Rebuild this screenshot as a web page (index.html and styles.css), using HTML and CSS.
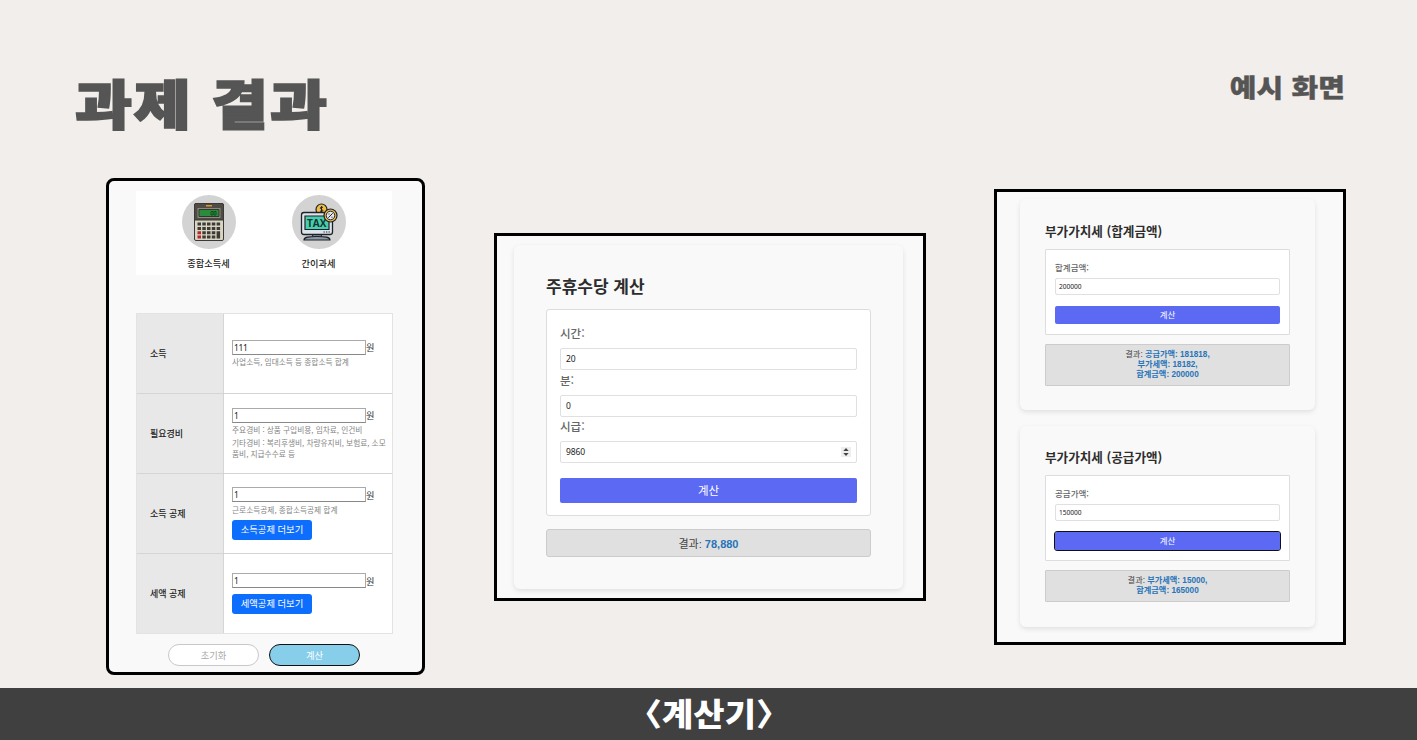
FILE: index.html
```html
<!DOCTYPE html>
<html lang="ko">
<head>
<meta charset="utf-8">
<title>과제 결과</title>
<link rel="stylesheet" href="styles.css">
</head>
<body>
<div class="slide">
  <header class="head">
    <h1 class="title">과제 결과</h1>
    <p class="subtitle">예시 화면</p>
  </header>
  <main class="panels">
    <section class="panel income">
      <nav class="tabs">
        <div class="tab">
          <span class="disc">
            <svg width="54" height="54" viewBox="0 0 54 54">
              <rect x="12.500" y="8.500" width="29" height="37" rx="1.500" fill="#d9d5c3" stroke="#3b3936"/>
              <path d="M12.500 25V10a1.500 1.500 0 0 1 1.500-1.500h26a1.500 1.500 0 0 1 1.500 1.500v15z" fill="#504b45" stroke="#3b3936"/>
              <path d="M24 10h6v1.500h-6z" fill="#d99a2b"/>
              <path d="M15.500 13h23v10h-23z" fill="#8d8a82"/>
              <path d="M17 14.500h20v7h-20z" fill="#2d8b3c" stroke="#2c3a2d"/>
              <path d="M29 16.500h2v3.500h-2zM32 16.500h2v3.500h-2z" fill="none" stroke="#194d25"/>
              <g fill="#3d3a37">
                <path d="M15.500 27.500h3.500v3h-3.500zM20.300 27.500h3.500v3h-3.500zM25 27.500h3.500v3h-3.500zM29.800 27.500h3.500v3h-3.500zM34.600 27.500h3.500v3h-3.500z"/>
                <path d="M15.500 31.900h3.500v3h-3.500zM20.300 31.900h3.500v3h-3.500zM25 31.900h3.500v3h-3.500zM29.800 31.900h3.500v3h-3.500zM34.600 31.900h3.500v3h-3.500z"/>
                <path d="M20.300 36.200h3.500v3h-3.500zM25 36.200h3.500v3h-3.500zM29.800 36.200h3.500v3h-3.500zM34.600 36.200h3.500v7.300h-3.500z"/>
                <path d="M20.300 40.500h3.500v3h-3.500zM25 40.500h3.500v3h-3.500zM29.800 40.500h3.500v3h-3.500z"/>
              </g>
              <path d="M15.500 36.200h3.500v3h-3.500zM15.500 40.500h3.500v3h-3.500z" fill="#b8262c"/>
            </svg>
          </span>
          <span class="tab-name">종합소득세</span>
        </div>
        <div class="tab">
          <span class="disc">
            <svg width="54" height="54" viewBox="0 0 54 54">
              <circle cx="29.500" cy="14.500" r="5.500" fill="#f2bd45" stroke="#1d2228" stroke-width="1.200"/>
              <path d="M31 12.500c-2.500-1.500-3.800 1-1.500 1.800s1.500 3.200-1.500 1.700M29.500 11.200v6.500" fill="none" stroke="#1d2228"/>
              <path d="M21 39h8l1 4h-10z" fill="#8d99a6" stroke="#1d2228"/>
              <path d="M12 45c0-3 4-3.500 13-3.500s13 .5 13 3.500z" fill="#8d99a6" stroke="#1d2228" stroke-width="1.200"/>
              <rect x="9.500" y="17.500" width="31" height="22" rx="2.500" fill="#dfe3ec" stroke="#1d2228" stroke-width="1.300"/>
              <path d="M13 21h24v13.500H13z" fill="#46cfae" stroke="#1d2228" stroke-width="1.200"/>
              <text class="tax" x="15" y="31.500">TAX</text>
              <path d="M31.500 37h1.300M34 37h1.300M36.500 37h1.300" stroke="#1d2228" stroke-width="1.200"/>
              <circle cx="38.500" cy="20.500" r="6.500" fill="#eeb947" stroke="#1d2228" stroke-width="1.200"/>
              <circle cx="38.500" cy="20.500" r="4.300" fill="#e3e6ee" stroke="#1d2228"/>
              <path d="M36.300 22.700l4.400-4.400M36.500 19h1M39.500 22.200h1" stroke="#1d2228"/>
            </svg>
          </span>
          <span class="tab-name">간이과세</span>
        </div>
      </nav>
      <div class="grid">
        <div class="row">
          <div class="name">소득</div>
          <div class="cell"><div class="entry"><span class="box">111</span>원</div><p class="note">사업소득, 임대소득 등 종합소득 합계</p></div>
        </div>
        <div class="row">
          <div class="name">필요경비</div>
          <div class="cell"><div class="entry"><span class="box">1</span>원</div><p class="note">주요경비 : 상품 구입비용, 임차료, 인건비</p><p class="note second">기타경비 : 복리후생비, 차량유지비, 보험료, 소모<br>품비, 지급수수료 등</p></div>
        </div>
        <div class="row">
          <div class="name">소득 공제</div>
          <div class="cell"><div class="entry"><span class="box">1</span>원</div><p class="note">근로소득공제, 종합소득공제 합계</p><span class="more">소득공제 더보기</span></div>
        </div>
        <div class="row">
          <div class="name">세액 공제</div>
          <div class="cell"><div class="entry"><span class="box">1</span>원</div><span class="more">세액공제 더보기</span></div>
        </div>
      </div>
      <div class="actions"><span class="pill">초기화</span><span class="pill go">계산</span></div>
    </section>

    <section class="panel weekly">
      <div class="card">
        <h2>주휴수당 계산</h2>
        <div class="form">
          <div class="label">시간:</div><div class="field">20</div>
          <div class="label">분:</div><div class="field">0</div>
          <div class="label">시급:</div>
          <div class="field">9860<span class="spin"><svg width="6" height="8" viewBox="0 0 6 8"><path d="M3 0l2.700 3H.3zM3 8L.3 5h5.400z" fill="#444"/></svg></span></div>
          <div class="submit">계산</div>
        </div>
        <div class="result"><p>결과: <b>78,880</b></p></div>
      </div>
    </section>

    <section class="panel vat">
      <div class="card">
        <h2>부가가치세 (합계금액)</h2>
        <div class="form">
          <div class="label">합계금액:</div><div class="field">200000</div>
          <div class="submit">계산</div>
        </div>
        <div class="result"><p>결과: <b>공급가액: 181818,<br>부가세액: 18182,<br>합계금액: 200000</b></p></div>
      </div>
      <div class="card">
        <h2>부가가치세 (공급가액)</h2>
        <div class="form">
          <div class="label">공급가액:</div><div class="field">150000</div>
          <div class="submit focus">계산</div>
        </div>
        <div class="result"><p>결과: <b>부가세액: 15000,<br>합계금액: 165000</b></p></div>
      </div>
    </section>
  </main>
  <footer class="foot"><span>〈</span><span class="foot-name">계산기</span><span>〉</span></footer>
</div>
</body>
</html>
```
FILE: styles.css
```css
* { box-sizing: border-box; margin: 0; padding: 0; }
body { font-family: "Noto Sans CJK KR", sans-serif; background: #f2eeeb; color: #333; overflow: hidden; }
.slide { width: 1417px; height: 740px; display: flex; flex-direction: column; white-space: nowrap; }

.head { height: 178px; padding: 68px 72px 0 75px; display: flex; justify-content: space-between; align-items: flex-start; color: #555; }
.title { font-size: 62px; line-height: 72px; font-weight: 900; letter-spacing: 1.600px; -webkit-text-stroke: 2px #555; transform: scaleY(.86); transform-origin: 0 22px; }
.subtitle { font-size: 29px; line-height: 36px; font-weight: 900; letter-spacing: .1px; -webkit-text-stroke: .4px #555; transform: scaleY(.88); }

.panels { height: 510px; display: flex; align-items: flex-start; padding-left: 106px; }
.panel { flex: none; border: 3px solid #000; background: #f9f9f9; }

.income { width: 319px; height: 497px; border-radius: 8px; padding: 10px 29px 0 27px; }
.tabs { width: 256px; height: 84px; background: #fff; display: flex; justify-content: center; padding: 4px 1px 0 0; }
.tab { width: 110px; display: flex; flex-direction: column; align-items: center; }
.disc { width: 54px; height: 54px; border-radius: 50%; background: #d3d3d3; }
.disc svg { display: block; }
.tax { font: 700 10px "Open Sans", sans-serif; fill: #17332e; }
.tab-name { margin-top: 7px; font-size: 9.200px; line-height: 14px; font-weight: 500; color: #222; }
.grid { margin-top: 38px; border: 1px solid #e3e3e3; width: 257px; }
.row { height: 80px; display: flex; border-bottom: 1px solid #d5d5d5; }
.row:last-child { border-bottom: 0; height: 79px; }
.name { width: 87px; padding-left: 13px; background: #e8e8e8; border-right: 1px solid #d5d5d5; font-size: 9px; font-weight: 500; color: #222; display: flex; align-items: center; }
.cell { flex: 1; padding: 0 0 1px 8px; background: #fff; display: flex; flex-direction: column; justify-content: center; align-items: flex-start; }
.entry { display: flex; align-items: center; height: 16px; font-size: 9.200px; line-height: 14px; }
.box { width: 134px; height: 15px; border: 1px solid #aaa; border-bottom-color: #888; padding-left: 1px; line-height: 13px; font-family: "Noto Sans", sans-serif; font-size: 8.500px; letter-spacing: -.4px; color: #222; }
.note { font-size: 7.700px; line-height: 11px; margin-top: 1px; color: #858585; }
.second { margin-top: 2px; }
.more { width: 80px; height: 20px; margin-top: 5px; border-radius: 3px; background: #0d6efd; color: #fff; font-size: 9.300px; line-height: 19px; text-align: center; }
.actions { margin-top: 10px; display: flex; gap: 10px; padding-left: 32px; }
.pill { width: 91px; height: 22px; border: 1px solid #c8c8c8; border-radius: 11px; background: #fff; color: #aaa; font-size: 9.300px; line-height: 20px; text-align: center; }
.go { background: #87ceeb; border-color: #111; color: #fff; }

.card { border-radius: 6px; background: #f9f9f9; box-shadow: 0 2px 5px rgba(0,0,0,.1); }
.form { background: #fff; border: 1px solid #ddd; border-radius: 3px; }
h2 { font-weight: 700; color: #2d2d2d; }
.label { font-weight: 500; color: #666; }
.field { display: flex; align-items: center; justify-content: space-between; border: 1px solid #e0e0e0; border-radius: 2px; background: #fff; font-family: "Noto Sans", sans-serif; color: #222; }
.submit { background: #5b69f3; color: #fff; border-radius: 2px; text-align: center; }
.result { background: #e0e0e0; border: 1px solid #ccc; border-radius: 3px; color: #444; font-family: "Liberation Sans", "Noto Sans CJK KR", sans-serif; display: flex; justify-content: center; align-items: center; text-align: center; }
.result b { color: #2874b8; }

.weekly { width: 432px; height: 368px; margin: 55px 0 0 69px; padding: 9px 20px 0 17px; }
.weekly .card { height: 344px; width: 389px; padding: 28px 32px 0; }
.weekly h2 { font-size: 17px; line-height: 26px; }
.weekly .form { height: 207px; margin-top: 10px; padding: 13px 13px 0; }
.weekly .label { font-size: 11.500px; line-height: 20px; height: 25px; }
.weekly .field { height: 22px; font-size: 8.500px; padding: 0 5px 1px; letter-spacing: -.1px; }
.weekly .field:not(:nth-last-child(2)) { margin-bottom: -.4px; }
.weekly .submit { height: 25px; margin-top: 15px; font-size: 11.500px; line-height: 24px; }
.weekly .result { height: 28px; margin-top: 13px; font-size: 11px; }
.spin { width: 10px; height: 10px; background: #eee; display: flex; align-items: center; justify-content: center; }

.vat { width: 352px; height: 456px; margin: 11px 0 0 68px; padding: 7px 28px 0 23px; }
.vat .card { width: 295px; height: 211px; padding: 21px 25px 0; }
.vat .card + .card { height: 201px; margin-top: 16px; padding-top: 20px; }
.vat h2 { font-size: 12.600px; line-height: 22px; }
.vat .form { height: 86px; margin-top: 7px; padding: 9px 9px 0; border-radius: 1px; }
.vat .label { height: 19px; font-size: 8.500px; line-height: 16px; }
.vat .field { height: 17px; padding: 0 3px 1px; font-size: 6.600px; }
.vat .submit { height: 18px; margin-top: 11px; font-size: 8.500px; line-height: 17px; }
.vat .focus { outline: 1px solid #111; }
.vat .result { height: 42px; margin-top: 9px; font-size: 8.200px; line-height: 10.300px; border-radius: 1px; }
.vat .card + .card .result { height: 32px; }

.foot { height: 52px; background: #404040; color: #fff; display: flex; justify-content: center; font-size: 34px; line-height: 50px; font-weight: 900; padding-left: 1px; }
.foot span { transform: scaleY(.92); }
.foot span:first-child { margin-left: -18px; }
.foot span:last-child { margin-right: -18px; }
```
